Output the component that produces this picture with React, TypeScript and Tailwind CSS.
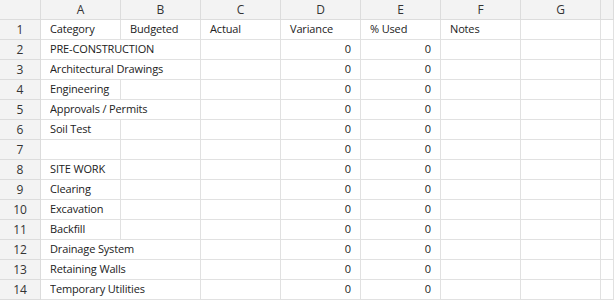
import clsx from "clsx";

type Row = {
    label: string;
    // width the overflowing label is cut at, when it runs into column B
    clip?: string;
};

const COLUMNS = ["A", "B", "C", "D", "E", "F", "G", ""];

const HEADINGS = ["Category", "Budgeted", "Actual", "Variance", "% Used", "Notes"];

const ROWS: Row[] = [
    { label: "PRE-CONSTRUCTION", clip: "w-[105px]" },
    { label: "Architectural Drawings", clip: "w-[116px]" },
    { label: "Engineering" },
    { label: "Approvals / Permits", clip: "w-[101px]" },
    { label: "Soil Test" },
    { label: "" },
    { label: "SITE WORK" },
    { label: "Clearing" },
    { label: "Excavation" },
    { label: "Backfill" },
    { label: "Drainage System", clip: "w-[85px]" },
    { label: "Retaining Walls", clip: "w-[78px]" },
    { label: "Temporary Utilities", clip: "w-[96px]" },
];

const cell = "h-5 border-r border-b border-[#e1e1e1] flex items-center overflow-hidden whitespace-nowrap";
const rowHead = "h-5 border-r border-b border-[#dcdcdc] bg-[#f3f3f3] flex items-center justify-center text-[12px] tracking-normal text-[#333]";

const Cell = ({ children, right, className }: { children?: React.ReactNode; right?: boolean; className?: string }) => (
    <div className={clsx(cell, right ? "justify-end pr-[9px]" : "pl-[9px]", className)}>{children}</div>
);

export default function App() {
    return (
        <div
            className="w-[614px] h-[300px] overflow-hidden bg-white text-[11px] tracking-[-0.15px] text-[#222]"
            style={{ fontFamily: "'Open Sans', 'Noto Sans', sans-serif" }}
        >
            <div className="grid grid-cols-[41px_repeat(7,80px)_1fr]">
                {/* column letters */}
                <div className={rowHead} />
                {COLUMNS.map((c, i) => (
                    <div key={i} className={rowHead}>
                        {c}
                    </div>
                ))}

                {/* row 1: headings */}
                <div className={rowHead}>1</div>
                {HEADINGS.map((h) => (
                    <Cell key={h}>{h}</Cell>
                ))}
                <Cell />
                <Cell />

                {ROWS.map((row, i) => (
                    <div key={i} className="contents">
                        <div className={rowHead}>{i + 2}</div>
                        {row.clip ? (
                            <div className={clsx(cell, "col-span-2 pl-[9px]")}>
                                <span className={clsx("block overflow-hidden", row.clip)}>{row.label}</span>
                            </div>
                        ) : (
                            <>
                                <Cell>{row.label}</Cell>
                                <Cell />
                            </>
                        )}
                        <Cell />
                        <Cell right>0</Cell>
                        <Cell right>0</Cell>
                        <Cell />
                        <Cell />
                        <Cell />
                    </div>
                ))}
            </div>
        </div>
    );
}
